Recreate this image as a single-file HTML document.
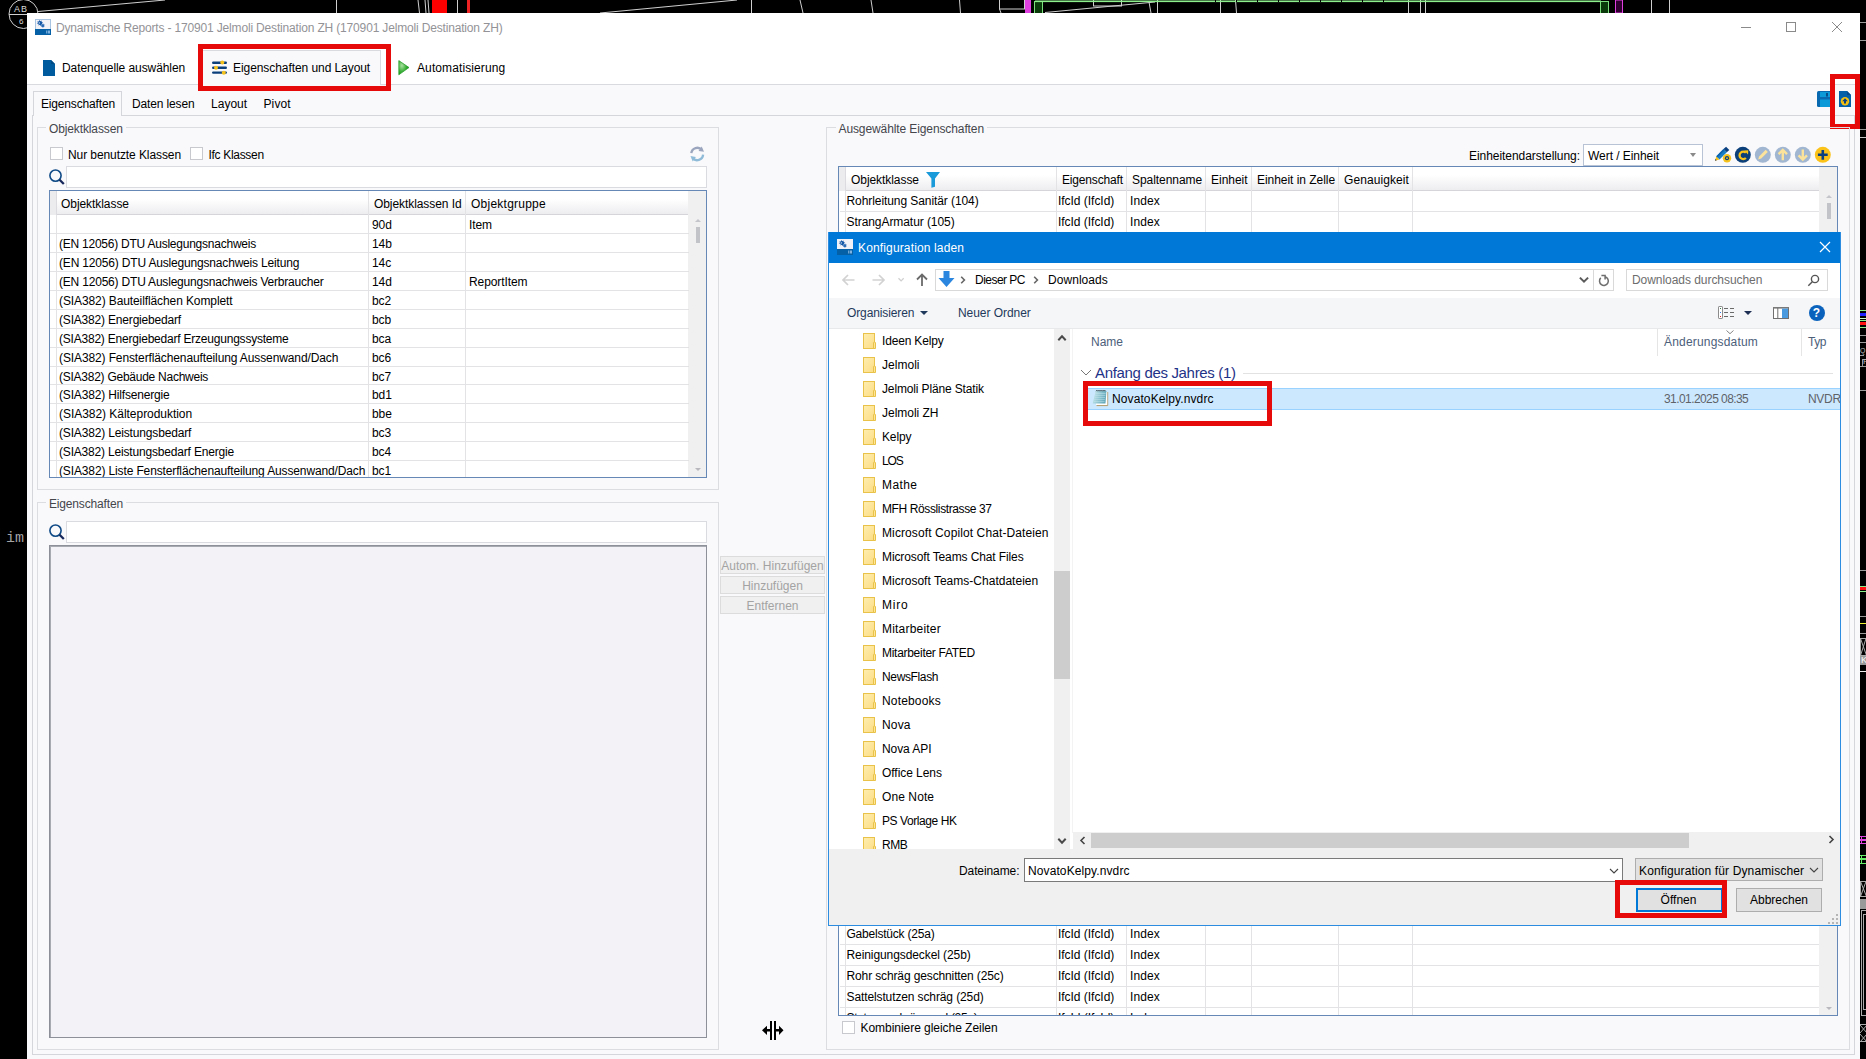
<!DOCTYPE html><html lang="de"><head><meta charset="utf-8"><title>Dynamische Reports</title><style>
*{box-sizing:border-box;margin:0;padding:0}
html,body{width:1866px;height:1059px;overflow:hidden;background:#000}
body{font-family:"Liberation Sans",sans-serif;font-size:12px;color:#000;position:relative}
.a{position:absolute}
.t{position:absolute;white-space:nowrap;line-height:14px;height:14px}
.win{left:27px;top:13px;width:1833px;height:1046px;background:#f9f9fb}
.hl{position:absolute;height:1px;background:#d5d6da}
.vl{position:absolute;width:1px;background:#d5d6da}
.gb{position:absolute;border:1px solid #dcdde1}
.cb{position:absolute;width:13px;height:13px;border:1px solid #c8c9cf;background:#fff}
.inp{position:absolute;background:#fff;border:1px solid #dadbe0}
.grid{position:absolute;background:#fff;border:1px solid #6588b6;overflow:hidden}
.hdr{position:absolute;background:linear-gradient(#fff 0%,#fff 35%,#ededf0 100%);border-bottom:1px solid #d6d6da}
.red{position:absolute;border:5px solid #e60a0a}
.btn{position:absolute;border:1px solid #dcdcdc;background:#f0f0f0;color:#a3a3a3;text-align:center;line-height:16px;white-space:nowrap}
.fold{position:absolute;width:13px;height:16px}
</style></head><body>
<svg class="a" style="left:0;top:0" width="1866" height="30" viewBox="0 0 1866 30">
<g fill="none" stroke="#cfcfcf" stroke-width="1">
<circle cx="23.5" cy="14" r="14.5"/><line x1="9" y1="14.5" x2="38" y2="14.5"/>
<line x1="38" y1="11.5" x2="165" y2="0"/>
<line x1="336.5" y1="0" x2="336.5" y2="13"/>
<line x1="418" y1="0" x2="419.5" y2="13"/><line x1="425" y1="0" x2="426" y2="13"/><line x1="428" y1="0" x2="429" y2="13"/>
<line x1="457.5" y1="0" x2="457.5" y2="13"/>
<line x1="600" y1="13" x2="737" y2="0"/>
<line x1="751.5" y1="0" x2="751.5" y2="13"/>
<line x1="800" y1="0" x2="803" y2="13"/>
<line x1="871" y1="0" x2="873" y2="13"/>
<line x1="959.5" y1="0" x2="960.5" y2="13"/>
<rect x="999.5" y="-2" width="25" height="11"/><line x1="999.5" y1="9" x2="1001" y2="13"/>
<rect x="1093.5" y="-2" width="28" height="8"/>
<line x1="1045" y1="12.5" x2="1155" y2="2"/>
<line x1="1121.5" y1="0" x2="1121.5" y2="6"/><line x1="1149" y1="2" x2="1151" y2="13"/><line x1="1157.5" y1="0" x2="1157.5" y2="13"/>
<line x1="1220.5" y1="0" x2="1220.5" y2="13"/><line x1="1235.5" y1="0" x2="1236.5" y2="13"/>
<line x1="1408.5" y1="0" x2="1408.5" y2="13"/><line x1="1420.5" y1="0" x2="1420.5" y2="13"/><line x1="1425.5" y1="0" x2="1425.5" y2="13"/>
<line x1="1651.5" y1="0" x2="1651.5" y2="13"/><line x1="1669.5" y1="0" x2="1669.5" y2="13"/>
</g>
<rect x="432" y="0" width="15" height="13" fill="#f00"/>
<rect x="467" y="0" width="3" height="13" fill="#e22"/>
<rect x="1025" y="0" width="6" height="13" fill="#e040e0"/>
<rect x="1034.5" y="1.5" width="8" height="12" fill="#0a3a0a" stroke="#7be07b"/>
<rect x="1035" y="0.5" width="566" height="1.6" fill="#8df08d"/>
<rect x="1600.5" y="1.5" width="8" height="12" fill="#0a3a0a" stroke="#7be07b"/>
<rect x="1615.5" y="0" width="7" height="13" fill="#300030" stroke="#e040e0"/>
<g fill="#000"><rect x="1257" y="0" width="1" height="2"/><rect x="1278" y="0" width="1" height="2"/><rect x="1299" y="0" width="1" height="2"/><rect x="1320" y="0" width="1" height="2"/><rect x="1341" y="0" width="1" height="2"/><rect x="1362" y="0" width="1" height="2"/><rect x="1383" y="0" width="1" height="2"/><rect x="1236" y="0" width="1" height="2"/><rect x="1215" y="0" width="1" height="2"/></g>
</svg>
<div class="t" style="left:14px;top:2px;color:#ddd;font-size:9px;letter-spacing:1px">AB</div>
<div class="t" style="left:19px;top:15px;color:#ddd;font-size:8px">6</div>
<div class="t" style="left:6px;top:531px;color:#a4a4a4;font-family:'Liberation Mono',monospace;font-size:15px;letter-spacing:0px;line-height:16px;height:16px">im</div>
<div class="a win">
<div class="a" style="left:0;top:0;width:1833px;height:71px;background:#fff"></div>
<div class="hl" style="left:0;top:71px;width:1833px;background:#d9dadf"></div>
</div>
<svg class="a" style="left:35px;top:19px" width="16" height="16" viewBox="0 0 16 16"><rect x="0" y="0" width="16" height="16" fill="#f1f1f8"/><rect x="0.5" y="0.5" width="15" height="15" fill="none" stroke="#a8c4e0"/><rect x="0" y="10" width="16" height="6" fill="#0560a6"/><path d="M1.8 4.2l1.2-0.6-0.6-1.4 1.5 0.2 0.5-1.4 1 1.2 1.3-0.7-0.1 1.5 1.4 0.3-1 1 0.8 1.3-1.5-0.1-0.5 1.4-1-1.1-1.3 0.8 0.1-1.5z" fill="#1558a8"/><circle cx="4.3" cy="3.9" r="0.7" fill="#dfe8f4"/><path d="M5.8 6.2l1-0.2-0.1-1.1 0.9 0.5 0.7-0.8 0.3 1 1.1 0 -0.6 0.9 0.8 0.7-1 0.3 0 1.1-0.9-0.6-0.7 0.8-0.3-1-1.1 0 0.6-0.9z" fill="#2a6ab4"/><rect x="11.3" y="11.5" width="1" height="3" fill="#9cc4ea"/><rect x="13" y="11.5" width="2" height="3" fill="#7fb2e0"/></svg>
<div class="t" style="left:56px;top:21px;color:#939397;letter-spacing:-0.167px">Dynamische Reports - 170901 Jelmoli Destination ZH (170901 Jelmoli Destination ZH)</div>
<svg class="a" style="left:1730px;top:17px" width="120" height="20" viewBox="0 0 120 20" fill="none" stroke="#8a8a8a" stroke-width="1"><line x1="11" y1="10.5" x2="21" y2="10.5"/><rect x="56.5" y="5.5" width="9" height="9"/><path d="M102 5l10 10M112 5l-10 10"/></svg>
<div class="a" style="left:202px;top:50px;width:179px;height:35px;background:#f9f9fb;border:1px solid #d9dadf;border-bottom:none"></div>
<svg class="a" style="left:43px;top:60px" width="12" height="16" viewBox="0 0 12 16"><path d="M0 0h8l4 4v12h-12z" fill="#005a9e"/><path d="M8 0l4 4h-4z" fill="#004a86"/></svg>
<div class="t" style="left:62px;top:61px;;letter-spacing:-0.078px">Datenquelle auswählen</div>
<svg class="a" style="left:211px;top:59px" width="17" height="17" viewBox="0 0 17 17"><g stroke="#0b3f7c" stroke-width="2.4" stroke-linecap="round"><line x1="2.2" y1="3.8" x2="14.8" y2="3.8"/><line x1="2.2" y1="8.7" x2="14.8" y2="8.7"/><line x1="2.2" y1="13.6" x2="14.8" y2="13.6"/></g><circle cx="11.3" cy="3.6" r="2" fill="#f5c21c"/><circle cx="5" cy="8.7" r="2" fill="#f5c21c"/><circle cx="12.8" cy="13.8" r="2" fill="#f5c21c"/></svg>
<div class="t" style="left:233px;top:61px;;letter-spacing:-0.069px">Eigenschaften und Layout</div>
<svg class="a" style="left:398px;top:60px" width="12" height="16" viewBox="0 0 12 16"><defs><radialGradient id="pg" cx="0.3" cy="0.35" r="0.7"><stop offset="0" stop-color="#a8e0a0"/><stop offset="0.6" stop-color="#3db03a"/><stop offset="1" stop-color="#17961a"/></radialGradient></defs><path d="M0.8 0.6l10.2 6.9-10.2 7.3z" fill="url(#pg)" stroke="#1f9a22" stroke-width="0.7" stroke-linejoin="round"/></svg>
<div class="t" style="left:417px;top:61px;;letter-spacing:0.106px">Automatisierung</div>
<div class="red" style="left:198px;top:44px;width:193px;height:47px"></div>
<div class="hl" style="left:32px;top:115px;width:1823px;background:#d5d6db"></div>
<div class="vl" style="left:32px;top:115px;height:940px;background:#d5d6db"></div>
<div class="vl" style="left:1854px;top:115px;height:940px;background:#d5d6db"></div>
<div class="hl" style="left:32px;top:1054px;width:1823px;background:#d5d6db"></div>
<div class="a" style="left:33px;top:91px;width:89px;height:25px;background:#f9f9fb;border:1px solid #d5d6db;border-bottom:none"></div>
<div class="t" style="left:41px;top:97px;;letter-spacing:-0.164px">Eigenschaften</div>
<div class="t" style="left:132px;top:97px;;letter-spacing:-0.135px">Daten lesen</div>
<div class="t" style="left:211px;top:97px;;letter-spacing:0.014px">Layout</div>
<div class="t" style="left:263.5px;top:97px;;letter-spacing:0.103px">Pivot</div>
<svg class="a" style="left:1817px;top:91px" width="15" height="16" viewBox="0 0 15 16"><rect x="0" y="0" width="15" height="16" rx="1.5" fill="#0868b0"/><rect x="3" y="1" width="10" height="5" fill="#0d9ad8"/><rect x="9" y="2" width="2" height="3.5" fill="#064f8c"/><rect x="3" y="8.5" width="11" height="7.5" fill="#0d9ad8"/></svg>
<svg class="a" style="left:1839px;top:91px" width="12" height="16" viewBox="0 0 12 16"><path d="M0 0h8l4 4v12h-12z" fill="#0660a8"/><path d="M8 0l4 4h-4z" fill="#054a8a"/><circle cx="6" cy="10.2" r="4.2" fill="#f5c010"/><path d="M6 7.2l-2.8 3h1.8v2.3h2v-2.3h1.8z" fill="#0a3f80"/></svg>
<div class="red" style="left:1830px;top:74px;width:30px;height:55px"></div>
<div class="gb" style="left:37px;top:127px;width:682px;height:363px"></div>
<div class="t" style="left:46px;top:122px;padding:0 3px;background:#f9f9fb;color:#44464c;letter-spacing:-0.123px">Objektklassen</div>
<div class="cb" style="left:50px;top:147px"></div>
<div class="t" style="left:68px;top:148px;;letter-spacing:-0.086px">Nur benutzte Klassen</div>
<div class="cb" style="left:190px;top:147px"></div>
<div class="t" style="left:208.5px;top:148px;;letter-spacing:-0.310px">Ifc Klassen</div>
<svg class="a" style="left:689px;top:146px" width="17" height="17" viewBox="0 0 17 17" fill="none"><path d="M2.3 7.2a6 6 0 0 1 10.6-3.2" stroke="#9ba6be" stroke-width="2.3"/><path d="M12.7 0.5l2.3 5.3-5.4-0.9z" fill="#9ba6be"/><path d="M14.1 8.6a6 6 0 0 1-10.6 3.4" stroke="#8fbbd8" stroke-width="2.3"/><path d="M3.7 15.4l-2.2-5.3 5.4 0.9z" fill="#8fbbd8"/></svg>
<svg class="a" style="left:49px;top:168px" width="17" height="18" viewBox="0 0 17 18" fill="none"><circle cx="6.5" cy="7.6" r="5.6" stroke="#0f4a86" stroke-width="1.6"/><path d="M10.6 11.8l4.2 4.2" stroke="#16275a" stroke-width="2.3"/></svg>
<div class="inp" style="left:66px;top:166px;width:641px;height:22px"></div>
<div class="grid" style="left:49px;top:190px;width:658px;height:288px">
<div class="hdr" style="left:0;top:0;width:638px;height:24px"></div>
<div class="a" style="left:0;top:0;width:7px;height:24px;background:#ececef;border-right:1px solid #dcdce0"></div>
<div class="a" style="left:638px;top:0;width:18px;height:286px;background:#f0f0f0"></div>
<div class="a" style="left:646px;top:36px;width:4px;height:16px;background:#c2c3c9"></div>
<div class="a" style="left:644.5px;top:28px;width:0;height:0;border:3.5px solid transparent;border-top:none;border-bottom:3.5px solid #c4c4cb"></div>
<div class="a" style="left:644.5px;top:277px;width:0;height:0;border:3.5px solid transparent;border-bottom:none;border-top:3.5px solid #b8b8be"></div>
<div class="vl" style="left:318px;top:0;height:286px;background:#e3e3e6"></div>
<div class="vl" style="left:415px;top:0;height:286px;background:#e3e3e6"></div>
<div class="vl" style="left:6px;top:24px;height:262px;background:#e3e3e6"></div>
<div class="t" style="left:11px;top:6px;;letter-spacing:-0.064px">Objektklasse</div>
<div class="t" style="left:324px;top:6px;;letter-spacing:-0.075px">Objektklassen Id</div>
<div class="t" style="left:421px;top:6px;;letter-spacing:0.241px">Objektgruppe</div>
<div class="hl" style="left:0;top:42px;width:639px;background:#e3e3e6"></div>
<div class="t" style="left:322px;top:27px;letter-spacing:-0.1px">90d</div>
<div class="t" style="left:419px;top:27px;letter-spacing:-0.1px">Item</div>
<div class="hl" style="left:0;top:61px;width:639px;background:#e3e3e6"></div>
<div class="t" style="left:9px;top:46px;;letter-spacing:-0.237px">(EN 12056) DTU Auslegungsnachweis</div>
<div class="t" style="left:322px;top:46px;letter-spacing:-0.1px">14b</div>
<div class="hl" style="left:0;top:80px;width:639px;background:#e3e3e6"></div>
<div class="t" style="left:9px;top:65px;;letter-spacing:-0.177px">(EN 12056) DTU Auslegungsnachweis Leitung</div>
<div class="t" style="left:322px;top:65px;letter-spacing:-0.1px">14c</div>
<div class="hl" style="left:0;top:99px;width:639px;background:#e3e3e6"></div>
<div class="t" style="left:9px;top:84px;;letter-spacing:-0.197px">(EN 12056) DTU Auslegungsnachweis Verbraucher</div>
<div class="t" style="left:322px;top:84px;letter-spacing:-0.1px">14d</div>
<div class="t" style="left:419px;top:84px;letter-spacing:-0.1px">ReportItem</div>
<div class="hl" style="left:0;top:118px;width:639px;background:#e3e3e6"></div>
<div class="t" style="left:9px;top:103px;;letter-spacing:-0.102px">(SIA382) Bauteilflächen Komplett</div>
<div class="t" style="left:322px;top:103px;letter-spacing:-0.1px">bc2</div>
<div class="hl" style="left:0;top:137px;width:639px;background:#e3e3e6"></div>
<div class="t" style="left:9px;top:122px;;letter-spacing:-0.185px">(SIA382) Energiebedarf</div>
<div class="t" style="left:322px;top:122px;letter-spacing:-0.1px">bcb</div>
<div class="hl" style="left:0;top:156px;width:639px;background:#e3e3e6"></div>
<div class="t" style="left:9px;top:141px;;letter-spacing:-0.214px">(SIA382) Energiebedarf Erzeugungssysteme</div>
<div class="t" style="left:322px;top:141px;letter-spacing:-0.1px">bca</div>
<div class="hl" style="left:0;top:175px;width:639px;background:#e3e3e6"></div>
<div class="t" style="left:9px;top:160px;;letter-spacing:-0.115px">(SIA382) Fensterflächenaufteilung Aussenwand/Dach</div>
<div class="t" style="left:322px;top:160px;letter-spacing:-0.1px">bc6</div>
<div class="hl" style="left:0;top:193px;width:639px;background:#e3e3e6"></div>
<div class="t" style="left:9px;top:179px;;letter-spacing:-0.255px">(SIA382) Gebäude Nachweis</div>
<div class="t" style="left:322px;top:179px;letter-spacing:-0.1px">bc7</div>
<div class="hl" style="left:0;top:212px;width:639px;background:#e3e3e6"></div>
<div class="t" style="left:9px;top:197px;;letter-spacing:-0.163px">(SIA382) Hilfsenergie</div>
<div class="t" style="left:322px;top:197px;letter-spacing:-0.1px">bd1</div>
<div class="hl" style="left:0;top:231px;width:639px;background:#e3e3e6"></div>
<div class="t" style="left:9px;top:216px;;letter-spacing:-0.039px">(SIA382) Kälteproduktion</div>
<div class="t" style="left:322px;top:216px;letter-spacing:-0.1px">bbe</div>
<div class="hl" style="left:0;top:250px;width:639px;background:#e3e3e6"></div>
<div class="t" style="left:9px;top:235px;;letter-spacing:-0.161px">(SIA382) Leistungsbedarf</div>
<div class="t" style="left:322px;top:235px;letter-spacing:-0.1px">bc3</div>
<div class="hl" style="left:0;top:269px;width:639px;background:#e3e3e6"></div>
<div class="t" style="left:9px;top:254px;;letter-spacing:-0.180px">(SIA382) Leistungsbedarf Energie</div>
<div class="t" style="left:322px;top:254px;letter-spacing:-0.1px">bc4</div>
<div class="hl" style="left:0;top:288px;width:639px;background:#e3e3e6"></div>
<div class="t" style="left:9px;top:273px;;letter-spacing:-0.132px">(SIA382) Liste Fensterflächenaufteilung Aussenwand/Dach</div>
<div class="t" style="left:322px;top:273px;letter-spacing:-0.1px">bc1</div>
</div>
<div class="gb" style="left:37px;top:502px;width:682px;height:548px"></div>
<div class="t" style="left:46px;top:497px;padding:0 3px;background:#f9f9fb;color:#44464c;letter-spacing:-0.164px">Eigenschaften</div>
<svg class="a" style="left:49px;top:523px" width="17" height="18" viewBox="0 0 17 18" fill="none"><circle cx="6.5" cy="7.6" r="5.6" stroke="#0f4a86" stroke-width="1.6"/><path d="M10.6 11.8l4.2 4.2" stroke="#16275a" stroke-width="2.3"/></svg>
<div class="inp" style="left:66px;top:521px;width:641px;height:22px"></div>
<div class="a" style="left:49px;top:545px;width:658px;height:493px;background:#f3f2f7;border:1px solid #8d9099;box-shadow:inset 1px 1px 0 #a8aab2"></div>
<div class="btn" style="left:720px;top:556px;width:105px;height:18px;letter-spacing:0.03px;padding-top:1px">Autom. Hinzufügen</div>
<div class="btn" style="left:720px;top:576px;width:105px;height:18px;padding-top:1px">Hinzufügen</div>
<div class="btn" style="left:720px;top:596px;width:105px;height:18px;padding-top:1px">Entfernen</div>
<svg class="a" style="left:762px;top:1020px" width="22" height="21" viewBox="0 0 22 21"><g fill="#000"><rect x="8" y="1" width="2" height="19"/><rect x="12" y="1" width="2" height="19"/><path d="M0 10.3l5-4.6v3.3h3v2.6h-3v3.3z"/><path d="M21.5 10.3l-4.5-4.6v3.3h-3v2.6h3v3.3z"/></g></svg>
<div class="gb" style="left:826px;top:127px;width:1024px;height:923px"></div>
<div class="t" style="left:835.5px;top:122px;padding:0 3px;background:#f9f9fb;color:#44464c;letter-spacing:-0.105px">Ausgewählte Eigenschaften</div>
<div class="t" style="left:1469px;top:149px;letter-spacing:-0.05px">Einheitendarstellung:</div>
<div class="inp" style="left:1583px;top:144px;width:120px;height:22px;border-color:#b9c3d6"></div>
<div class="t" style="left:1588px;top:149px;letter-spacing:-0.05px">Wert / Einheit</div>
<div class="a" style="left:1690px;top:153px;width:0;height:0;border:3.5px solid transparent;border-bottom:none;border-top:4px solid #8a8a8a"></div>
<svg class="a" style="left:1713px;top:146px" width="120" height="18" viewBox="0 0 120 18">
<g><path d="M2 14.8l1.3-4.6 3.3 3.3z" fill="#f5c21c"/><path d="M2 14.8l0.5-1.7 1.2 1.2z" fill="#1a2a50"/><path d="M3.3 10.2l7.2-7.2 3.3 3.3-7.2 7.2z" fill="#1a80c6"/><path d="M3.3 10.2l7.2-7.2 1.2 1.2-7.2 7.2z" fill="#0c62ac"/><path d="M10.5 3l2.6-2.3 3.2 3.2-2.5 2.4z" fill="#0a3f80"/><circle cx="14" cy="12.2" r="4.2" fill="#f5c21c"/><circle cx="14" cy="12.2" r="2.1" fill="#0a3f80"/><circle cx="14" cy="12.2" r="0.9" fill="#f5c21c"/></g>
<g><circle cx="29.8" cy="8.8" r="8" fill="#0a3f7a"/><path d="M32.9 12a3.7 3.7 0 1 1 0-5.2" fill="none" stroke="#f8c31c" stroke-width="2.3"/><path d="M31.2 4.6l4.1-0.4-0.3 4.4z" fill="#f8c31c"/></g>
<g><circle cx="49.8" cy="8.8" r="8" fill="#a1b7d1"/><path d="M45.2 13.4l0.9-3 6.6-6.6 2.1 2.1-6.6 6.6z" fill="#fbe39b"/></g>
<g><circle cx="69.8" cy="8.8" r="8" fill="#a1b7d1"/><path d="M69.8 14.2v-9.5M65.6 8.2l4.2-4.2 4.2 4.2" fill="none" stroke="#fbe39b" stroke-width="2.4"/></g>
<g><circle cx="89.8" cy="8.8" r="8" fill="#a1b7d1"/><path d="M89.8 3.4v9.5M85.6 9.4l4.2 4.2 4.2-4.2" fill="none" stroke="#fbe39b" stroke-width="2.4"/></g>
<g><circle cx="109.8" cy="8.8" r="8" fill="#fbc31a"/><path d="M104.9 8.8h9.8M109.8 3.9v9.8" stroke="#0a3f80" stroke-width="2.6"/></g>
</svg>
<div class="grid" style="left:838px;top:166px;width:1000px;height:850px"><div class="a" style="left:1px;top:0;width:998px;height:848px">
<div class="hdr" style="left:0;top:0;width:979px;height:24px"></div>
<div class="a" style="left:-1px;top:0;width:7px;height:24px;background:#ececef;border-right:1px solid #dcdce0"></div>
<div class="a" style="left:979px;top:0;width:19px;height:848px;background:#f0f0f0"></div>
<div class="a" style="left:987px;top:36px;width:4px;height:16px;background:#c2c3c9"></div>
<div class="a" style="left:985.5px;top:28px;width:0;height:0;border:3.5px solid transparent;border-top:none;border-bottom:3.5px solid #c4c4cb"></div>
<div class="a" style="left:985.5px;top:840px;width:0;height:0;border:3.5px solid transparent;border-bottom:none;border-top:3.5px solid #b8b8be"></div>
<div class="vl" style="left:5px;top:24px;height:824px;background:#e3e3e6"></div>
<div class="vl" style="left:216px;top:0;height:848px;background:#e3e3e6"></div>
<div class="vl" style="left:286px;top:0;height:848px;background:#e3e3e6"></div>
<div class="vl" style="left:365px;top:0;height:848px;background:#e3e3e6"></div>
<div class="vl" style="left:411px;top:0;height:848px;background:#e3e3e6"></div>
<div class="vl" style="left:498px;top:0;height:848px;background:#e3e3e6"></div>
<div class="vl" style="left:572px;top:0;height:848px;background:#e3e3e6"></div>
<div class="t" style="left:11px;top:6px;;letter-spacing:-0.064px">Objektklasse</div>
<svg class="a" style="left:86px;top:4.5px" width="14" height="16" viewBox="0 0 14 16"><path d="M0 0h14l-5 6.5v8.3l-3.6 1v-9.3z" fill="#1a9ad9"/></svg>
<div class="t" style="left:222px;top:6px;;letter-spacing:-0.172px">Eigenschaft</div>
<div class="t" style="left:292px;top:6px;;letter-spacing:-0.052px">Spaltenname</div>
<div class="t" style="left:371px;top:6px;;letter-spacing:-0.017px">Einheit</div>
<div class="t" style="left:417px;top:6px;;letter-spacing:-0.041px">Einheit in Zelle</div>
<div class="t" style="left:504px;top:6px;;letter-spacing:0.075px">Genauigkeit</div>
<div class="hl" style="left:0;top:44px;width:979px;background:#e3e3e6"></div>
<div class="t" style="left:6.5px;top:27px;;letter-spacing:-0.078px">Rohrleitung Sanitär (104)</div>
<div class="t" style="left:218px;top:27px;;letter-spacing:-0.032px">IfcId (IfcId)</div>
<div class="t" style="left:290px;top:27px;;letter-spacing:0.085px">Index</div>
<div class="hl" style="left:0;top:65px;width:979px;background:#e3e3e6"></div>
<div class="t" style="left:6.5px;top:48px;;letter-spacing:-0.066px">StrangArmatur (105)</div>
<div class="t" style="left:218px;top:48px;;letter-spacing:-0.032px">IfcId (IfcId)</div>
<div class="t" style="left:290px;top:48px;;letter-spacing:0.085px">Index</div>
<div class="hl" style="left:0;top:777px;width:979px;background:#e3e3e6"></div>
<div class="t" style="left:6.5px;top:760px;;letter-spacing:-0.213px">Gabelstück (25a)</div>
<div class="t" style="left:218px;top:760px;;letter-spacing:-0.032px">IfcId (IfcId)</div>
<div class="t" style="left:290px;top:760px;;letter-spacing:0.085px">Index</div>
<div class="hl" style="left:0;top:798px;width:979px;background:#e3e3e6"></div>
<div class="t" style="left:6.5px;top:781px;;letter-spacing:-0.089px">Reinigungsdeckel (25b)</div>
<div class="t" style="left:218px;top:781px;;letter-spacing:-0.032px">IfcId (IfcId)</div>
<div class="t" style="left:290px;top:781px;;letter-spacing:0.085px">Index</div>
<div class="hl" style="left:0;top:819px;width:979px;background:#e3e3e6"></div>
<div class="t" style="left:6.5px;top:802px;;letter-spacing:-0.127px">Rohr schräg geschnitten (25c)</div>
<div class="t" style="left:218px;top:802px;;letter-spacing:-0.032px">IfcId (IfcId)</div>
<div class="t" style="left:290px;top:802px;;letter-spacing:0.085px">Index</div>
<div class="hl" style="left:0;top:840px;width:979px;background:#e3e3e6"></div>
<div class="t" style="left:6.5px;top:823px;;letter-spacing:-0.115px">Sattelstutzen schräg (25d)</div>
<div class="t" style="left:218px;top:823px;;letter-spacing:-0.032px">IfcId (IfcId)</div>
<div class="t" style="left:290px;top:823px;;letter-spacing:0.085px">Index</div>
<div class="hl" style="left:0;top:861px;width:979px;background:#e3e3e6"></div>
<div class="t" style="left:6.5px;top:844px;;letter-spacing:-0.315px">Stutzen schräg rund (25e)</div>
<div class="t" style="left:218px;top:844px;;letter-spacing:-0.032px">IfcId (IfcId)</div>
<div class="t" style="left:290px;top:844px;;letter-spacing:0.085px">Index</div>
</div></div>
<div class="cb" style="left:842px;top:1021px"></div>
<div class="t" style="left:860.5px;top:1021px;;letter-spacing:-0.041px">Kombiniere gleiche Zeilen</div>
<div class="a" style="left:828px;top:232px;width:1013px;height:694px;background:#fff;border:1px solid #2b8ce0;border-top:none;overflow:hidden">
<div class="a" style="left:-1px;top:0;width:1013px;height:31px;background:#0078d7"></div>
<svg class="a" style="left:8px;top:7px" width="16" height="16" viewBox="0 0 16 16"><rect x="0" y="0" width="16" height="16" fill="#f1f1f8"/><rect x="0" y="10" width="16" height="6" fill="#0560a6"/><path d="M1.8 4.2l1.2-0.6-0.6-1.4 1.5 0.2 0.5-1.4 1 1.2 1.3-0.7-0.1 1.5 1.4 0.3-1 1 0.8 1.3-1.5-0.1-0.5 1.4-1-1.1-1.3 0.8 0.1-1.5z" fill="#1558a8"/><circle cx="4.3" cy="3.9" r="0.7" fill="#dfe8f4"/><path d="M5.8 6.2l1-0.2-0.1-1.1 0.9 0.5 0.7-0.8 0.3 1 1.1 0 -0.6 0.9 0.8 0.7-1 0.3 0 1.1-0.9-0.6-0.7 0.8-0.3-1-1.1 0 0.6-0.9z" fill="#2a6ab4"/><rect x="11.3" y="11.5" width="1" height="3" fill="#9cc4ea"/><rect x="13" y="11.5" width="2" height="3" fill="#7fb2e0"/></svg>
<div class="t" style="left:29px;top:9px;color:#fff;letter-spacing:0.143px">Konfiguration laden</div>
<svg class="a" style="left:990px;top:9px" width="12" height="12" viewBox="0 0 12 12"><path d="M1 1l10 10M11 1l-10 10" stroke="#fff" stroke-width="1.2" fill="none"/></svg>
<svg class="a" style="left:10px;top:37px" width="90" height="22" viewBox="0 0 90 22" fill="none" stroke-linecap="butt">
<path d="M4 11h11.5M9 6l-5 5 5 5" stroke="#d2d2d2" stroke-width="1.7"/>
<path d="M33.5 11h11.5M40 6l5 5-5 5" stroke="#d2d2d2" stroke-width="1.7"/>
<path d="M59.5 9.3l2.6 2.6 2.6-2.6" stroke="#d0d0d0" stroke-width="1.3"/>
<path d="M83 17v-11M78 10.5l5-5 5 5" stroke="#6a6a6a" stroke-width="1.8"/>
</svg>
<div class="a" style="left:106px;top:37px;width:679px;height:22px;border:1px solid #d9d9d9"></div>
<div class="a" style="left:764px;top:37px;width:1px;height:22px;background:#d9d9d9"></div>
<svg class="a" style="left:109px;top:39px" width="17" height="17" viewBox="0 0 17 17"><path d="M5.5 0h6v7h5l-8 9-8-9h5z" fill="#2a86de"/></svg>
<svg class="a" style="left:131px;top:43px" width="6" height="10" viewBox="0 0 6 10"><path d="M1.2 1.8l3.2 3.2-3.2 3.2" stroke="#666" stroke-width="1.6" fill="none"/></svg>
<div class="t" style="left:146px;top:41px;;letter-spacing:-0.523px">Dieser PC</div>
<svg class="a" style="left:204px;top:43px" width="6" height="10" viewBox="0 0 6 10"><path d="M1.2 1.8l3.2 3.2-3.2 3.2" stroke="#666" stroke-width="1.6" fill="none"/></svg>
<div class="t" style="left:219px;top:41px;;letter-spacing:0.053px">Downloads</div>
<svg class="a" style="left:749px;top:44px" width="12" height="8" viewBox="0 0 12 8"><path d="M1.9 1.6l4.1 4.1 4.1-4.1" stroke="#5a5a5a" stroke-width="2" fill="none"/></svg>
<svg class="a" style="left:768px;top:40px" width="14" height="16" viewBox="0 0 14 16" fill="none" stroke="#6e6e6e" stroke-width="1.5"><path d="M8.04 4.75A4.4 4.4 0 1 1 3.79 5.89"/><path d="M4.4 3.6H8.1V7.4"/></svg>
<div class="a" style="left:797px;top:37px;width:202px;height:22px;border:1px solid #d9d9d9"></div>
<div class="t" style="left:803px;top:41px;color:#6d6d6d;letter-spacing:-0.05px">Downloads durchsuchen</div>
<svg class="a" style="left:978px;top:42px" width="13" height="13" viewBox="0 0 13 13" fill="none" stroke="#555" stroke-width="1.4"><circle cx="8" cy="5" r="3.6"/><path d="M5.3 7.7l-4 4"/></svg>
<div class="a" style="left:0;top:66px;width:1011px;height:31px;background:#f5f6f7;border-bottom:1px solid #e8e9ea"></div>
<div class="t" style="left:18px;top:74px;color:#1e395b;letter-spacing:-0.12px">Organisieren</div>
<div class="a" style="left:91px;top:79px;width:0;height:0;border:4px solid transparent;border-bottom:none;border-top:4px solid #1e395b"></div>
<div class="t" style="left:129px;top:74px;color:#1e395b;letter-spacing:-0.05px">Neuer Ordner</div>
<svg class="a" style="left:889px;top:74px" width="36" height="14" viewBox="0 0 36 14"><rect x="0.5" y="0.5" width="4" height="12" rx="0.6" fill="#fff" stroke="#8c8c8c"/><rect x="2" y="2" width="1" height="1" fill="#3a7a4a"/><rect x="2" y="6" width="1" height="1" fill="#3a7adf"/><rect x="2" y="10" width="1" height="1" fill="#e02020"/><g fill="#6a6a6a"><rect x="6" y="2" width="4" height="1"/><rect x="12" y="2" width="4" height="1"/><rect x="6" y="6" width="4" height="1"/><rect x="12" y="6" width="4" height="1"/><rect x="6" y="10" width="4" height="1"/><rect x="12" y="10" width="4" height="1"/></g><path d="M26 5h8l-4 4z" fill="#1e2f55"/></svg>
<svg class="a" style="left:944px;top:75px" width="16" height="12" viewBox="0 0 16 12"><rect x="0.5" y="0.5" width="15" height="11" fill="#fff" stroke="#707070"/><rect x="0" y="0" width="16" height="1.6" fill="#7a7a7a"/><rect x="4.3" y="1" width="1" height="10.5" fill="#707070"/><rect x="9" y="1.6" width="6" height="9.4" fill="#4a9ae0"/></svg>
<div class="a" style="left:979.5px;top:73px;width:16px;height:16px;border-radius:50%;background:#0b62bd;color:#fff;font-weight:bold;font-size:12px;line-height:16px;text-align:center">?</div>
<svg width="0" height="0" style="position:absolute"><defs><linearGradient id="fg" x1="0" y1="0" x2="1" y2="1"><stop offset="0" stop-color="#ffeeb0"/><stop offset="1" stop-color="#fbdc84"/></linearGradient></defs></svg>
<svg class="fold" style="left:34px;top:101.0px" viewBox="0 0 13 16"><rect x="0.5" y="0.5" width="11" height="15" fill="url(#fg)" stroke="#e9c349"/><path d="M10.5 15.5v-5.5q0-1 1-1t1 1v5.5z" fill="#ffe596" stroke="#e9c349"/></svg>
<div class="t" style="left:53px;top:102.0px;;letter-spacing:-0.169px">Ideen Kelpy</div>
<svg class="fold" style="left:34px;top:125.0px" viewBox="0 0 13 16"><rect x="0.5" y="0.5" width="11" height="15" fill="url(#fg)" stroke="#e9c349"/><path d="M10.5 15.5v-5.5q0-1 1-1t1 1v5.5z" fill="#ffe596" stroke="#e9c349"/></svg>
<div class="t" style="left:53px;top:126.0px;;letter-spacing:0.026px">Jelmoli</div>
<svg class="fold" style="left:34px;top:149.0px" viewBox="0 0 13 16"><rect x="0.5" y="0.5" width="11" height="15" fill="url(#fg)" stroke="#e9c349"/><path d="M10.5 15.5v-5.5q0-1 1-1t1 1v5.5z" fill="#ffe596" stroke="#e9c349"/></svg>
<div class="t" style="left:53px;top:150.0px;;letter-spacing:-0.143px">Jelmoli Pläne Statik</div>
<svg class="fold" style="left:34px;top:173.0px" viewBox="0 0 13 16"><rect x="0.5" y="0.5" width="11" height="15" fill="url(#fg)" stroke="#e9c349"/><path d="M10.5 15.5v-5.5q0-1 1-1t1 1v5.5z" fill="#ffe596" stroke="#e9c349"/></svg>
<div class="t" style="left:53px;top:174.0px;;letter-spacing:-0.019px">Jelmoli ZH</div>
<svg class="fold" style="left:34px;top:197.0px" viewBox="0 0 13 16"><rect x="0.5" y="0.5" width="11" height="15" fill="url(#fg)" stroke="#e9c349"/><path d="M10.5 15.5v-5.5q0-1 1-1t1 1v5.5z" fill="#ffe596" stroke="#e9c349"/></svg>
<div class="t" style="left:53px;top:198.0px;;letter-spacing:-0.133px">Kelpy</div>
<svg class="fold" style="left:34px;top:221.0px" viewBox="0 0 13 16"><rect x="0.5" y="0.5" width="11" height="15" fill="url(#fg)" stroke="#e9c349"/><path d="M10.5 15.5v-5.5q0-1 1-1t1 1v5.5z" fill="#ffe596" stroke="#e9c349"/></svg>
<div class="t" style="left:53px;top:222.0px;;letter-spacing:-1.158px">LOS</div>
<svg class="fold" style="left:34px;top:245.0px" viewBox="0 0 13 16"><rect x="0.5" y="0.5" width="11" height="15" fill="url(#fg)" stroke="#e9c349"/><path d="M10.5 15.5v-5.5q0-1 1-1t1 1v5.5z" fill="#ffe596" stroke="#e9c349"/></svg>
<div class="t" style="left:53px;top:246.0px;;letter-spacing:0.410px">Mathe</div>
<svg class="fold" style="left:34px;top:269.0px" viewBox="0 0 13 16"><rect x="0.5" y="0.5" width="11" height="15" fill="url(#fg)" stroke="#e9c349"/><path d="M10.5 15.5v-5.5q0-1 1-1t1 1v5.5z" fill="#ffe596" stroke="#e9c349"/></svg>
<div class="t" style="left:53px;top:270.0px;;letter-spacing:-0.387px">MFH Rösslistrasse 37</div>
<svg class="fold" style="left:34px;top:293.0px" viewBox="0 0 13 16"><rect x="0.5" y="0.5" width="11" height="15" fill="url(#fg)" stroke="#e9c349"/><path d="M10.5 15.5v-5.5q0-1 1-1t1 1v5.5z" fill="#ffe596" stroke="#e9c349"/></svg>
<div class="t" style="left:53px;top:294.0px;;letter-spacing:0.107px">Microsoft Copilot Chat-Dateien</div>
<svg class="fold" style="left:34px;top:317.0px" viewBox="0 0 13 16"><rect x="0.5" y="0.5" width="11" height="15" fill="url(#fg)" stroke="#e9c349"/><path d="M10.5 15.5v-5.5q0-1 1-1t1 1v5.5z" fill="#ffe596" stroke="#e9c349"/></svg>
<div class="t" style="left:53px;top:318.0px;;letter-spacing:-0.112px">Microsoft Teams Chat Files</div>
<svg class="fold" style="left:34px;top:341.0px" viewBox="0 0 13 16"><rect x="0.5" y="0.5" width="11" height="15" fill="url(#fg)" stroke="#e9c349"/><path d="M10.5 15.5v-5.5q0-1 1-1t1 1v5.5z" fill="#ffe596" stroke="#e9c349"/></svg>
<div class="t" style="left:53px;top:342.0px;;letter-spacing:0.013px">Microsoft Teams-Chatdateien</div>
<svg class="fold" style="left:34px;top:365.0px" viewBox="0 0 13 16"><rect x="0.5" y="0.5" width="11" height="15" fill="url(#fg)" stroke="#e9c349"/><path d="M10.5 15.5v-5.5q0-1 1-1t1 1v5.5z" fill="#ffe596" stroke="#e9c349"/></svg>
<div class="t" style="left:53px;top:366.0px;;letter-spacing:0.785px">Miro</div>
<svg class="fold" style="left:34px;top:389.0px" viewBox="0 0 13 16"><rect x="0.5" y="0.5" width="11" height="15" fill="url(#fg)" stroke="#e9c349"/><path d="M10.5 15.5v-5.5q0-1 1-1t1 1v5.5z" fill="#ffe596" stroke="#e9c349"/></svg>
<div class="t" style="left:53px;top:390.0px;;letter-spacing:0.201px">Mitarbeiter</div>
<svg class="fold" style="left:34px;top:413.0px" viewBox="0 0 13 16"><rect x="0.5" y="0.5" width="11" height="15" fill="url(#fg)" stroke="#e9c349"/><path d="M10.5 15.5v-5.5q0-1 1-1t1 1v5.5z" fill="#ffe596" stroke="#e9c349"/></svg>
<div class="t" style="left:53px;top:414.0px;;letter-spacing:-0.288px">Mitarbeiter FATED</div>
<svg class="fold" style="left:34px;top:437.0px" viewBox="0 0 13 16"><rect x="0.5" y="0.5" width="11" height="15" fill="url(#fg)" stroke="#e9c349"/><path d="M10.5 15.5v-5.5q0-1 1-1t1 1v5.5z" fill="#ffe596" stroke="#e9c349"/></svg>
<div class="t" style="left:53px;top:438.0px;;letter-spacing:-0.357px">NewsFlash</div>
<svg class="fold" style="left:34px;top:461.0px" viewBox="0 0 13 16"><rect x="0.5" y="0.5" width="11" height="15" fill="url(#fg)" stroke="#e9c349"/><path d="M10.5 15.5v-5.5q0-1 1-1t1 1v5.5z" fill="#ffe596" stroke="#e9c349"/></svg>
<div class="t" style="left:53px;top:462.0px;;letter-spacing:0.166px">Notebooks</div>
<svg class="fold" style="left:34px;top:485.0px" viewBox="0 0 13 16"><rect x="0.5" y="0.5" width="11" height="15" fill="url(#fg)" stroke="#e9c349"/><path d="M10.5 15.5v-5.5q0-1 1-1t1 1v5.5z" fill="#ffe596" stroke="#e9c349"/></svg>
<div class="t" style="left:53px;top:486.0px;;letter-spacing:0.161px">Nova</div>
<svg class="fold" style="left:34px;top:509.0px" viewBox="0 0 13 16"><rect x="0.5" y="0.5" width="11" height="15" fill="url(#fg)" stroke="#e9c349"/><path d="M10.5 15.5v-5.5q0-1 1-1t1 1v5.5z" fill="#ffe596" stroke="#e9c349"/></svg>
<div class="t" style="left:53px;top:510.0px;;letter-spacing:-0.076px">Nova API</div>
<svg class="fold" style="left:34px;top:533.0px" viewBox="0 0 13 16"><rect x="0.5" y="0.5" width="11" height="15" fill="url(#fg)" stroke="#e9c349"/><path d="M10.5 15.5v-5.5q0-1 1-1t1 1v5.5z" fill="#ffe596" stroke="#e9c349"/></svg>
<div class="t" style="left:53px;top:534.0px;;letter-spacing:-0.048px">Office Lens</div>
<svg class="fold" style="left:34px;top:557.0px" viewBox="0 0 13 16"><rect x="0.5" y="0.5" width="11" height="15" fill="url(#fg)" stroke="#e9c349"/><path d="M10.5 15.5v-5.5q0-1 1-1t1 1v5.5z" fill="#ffe596" stroke="#e9c349"/></svg>
<div class="t" style="left:53px;top:558.0px;;letter-spacing:0.089px">One Note</div>
<svg class="fold" style="left:34px;top:581.0px" viewBox="0 0 13 16"><rect x="0.5" y="0.5" width="11" height="15" fill="url(#fg)" stroke="#e9c349"/><path d="M10.5 15.5v-5.5q0-1 1-1t1 1v5.5z" fill="#ffe596" stroke="#e9c349"/></svg>
<div class="t" style="left:53px;top:582.0px;;letter-spacing:-0.421px">PS Vorlage HK</div>
<svg class="fold" style="left:34px;top:605.0px" viewBox="0 0 13 16"><rect x="0.5" y="0.5" width="11" height="15" fill="url(#fg)" stroke="#e9c349"/><path d="M10.5 15.5v-5.5q0-1 1-1t1 1v5.5z" fill="#ffe596" stroke="#e9c349"/></svg>
<div class="t" style="left:53px;top:606.0px;;letter-spacing:-0.486px">RMB</div>
<div class="a" style="left:225px;top:97px;width:16px;height:520px;background:#f0f0f0"></div>
<div class="a" style="left:225px;top:339px;width:16px;height:108px;background:#cdcdcd"></div>
<svg class="a" style="left:228px;top:101px" width="10" height="9" viewBox="0 0 10 9"><path d="M1.3 7.2l3.7-3.9 3.7 3.9" stroke="#4a4a4a" stroke-width="2" fill="none"/></svg>
<svg class="a" style="left:228px;top:604.5px" width="10" height="9" viewBox="0 0 10 9"><path d="M1.3 1.8l3.7 3.9 3.7-3.9" stroke="#4a4a4a" stroke-width="2" fill="none"/></svg>
<div class="a" style="left:243px;top:97px;width:1px;height:504px;background:#f3f3f3"></div>
<div class="t" style="left:262px;top:103px;color:#4c607a">Name</div>
<div class="t" style="left:835px;top:103px;color:#4c607a;letter-spacing:0.184px">Änderungsdatum</div>
<div class="t" style="left:979px;top:103px;color:#4c607a;letter-spacing:-0.422px">Typ</div>
<div class="a" style="left:828px;top:97px;width:1px;height:27px;background:#e5e5e5"></div>
<div class="a" style="left:972px;top:97px;width:1px;height:27px;background:#e5e5e5"></div>
<svg class="a" style="left:896.5px;top:97.5px" width="8" height="5" viewBox="0 0 8 5"><path d="M0.5 0.5l3.5 3.2 3.5-3.2" stroke="#777" stroke-width="0.9" fill="none"/></svg>
<svg class="a" style="left:251px;top:137px" width="12" height="8" viewBox="0 0 12 8"><path d="M1 1l5 5 5-5" stroke="#777" stroke-width="1" fill="none"/></svg>
<div class="t" style="left:266px;top:132px;font-size:15px;line-height:18px;height:18px;color:#1e3287;letter-spacing:-0.33px">Anfang des Jahres (1)</div>
<div class="a" style="left:414px;top:141px;width:590px;height:1px;background:#e2e2e2"></div>
<div class="a" style="left:258px;top:156px;width:760px;height:22px;background:#cce8ff;border:1px solid #99d1ff"></div>
<svg class="a" style="left:263px;top:157px" width="17" height="18" viewBox="0 0 17 18"><defs><linearGradient id="np" x1="0" y1="0" x2="1" y2="0.3"><stop offset="0" stop-color="#d4eef2"/><stop offset="0.6" stop-color="#8cc4d0"/><stop offset="1" stop-color="#62a8ba"/></linearGradient></defs>
<path d="M4.5 16.6h11.2v-13.6" fill="none" stroke="#b39a68" stroke-width="1"/>
<path d="M4 3h11.2v13h-11.2z" fill="#fff"/>
<path d="M3.6 2h10.8l-0.9 12.6h-12.8z" fill="url(#np)"/>
<path d="M3 4.6h10.6M2.8 6.6h10.6M2.5 8.6h10.6M2.2 10.6h10.6M1.9 12.6h10.6" stroke="#c4e4ec" stroke-width="0.7" opacity="0.8"/>
<path d="M4 2.2l0.8-1.2 0.8 1.2 0.8-1.2 0.8 1.2 0.8-1.2 0.8 1.2 0.8-1.2 0.8 1.2 0.8-1.2 0.8 1.2 0.8-1.2 0.8 1.2" fill="none" stroke="#3a4a50" stroke-width="0.7"/>
</svg>
<div class="t" style="left:283px;top:160px;;letter-spacing:0.104px">NovatoKelpy.nvdrc</div>
<div class="t" style="left:835px;top:160px;color:#5f6368;letter-spacing:-0.575px">31.01.2025 08:35</div>
<div class="t" style="left:979px;top:160px;color:#5f6368;letter-spacing:-0.3px">NVDRC</div>
<div class="a" style="left:244px;top:600px;width:767px;height:17px;background:#f0f0f0"></div>
<div class="a" style="left:262px;top:601px;width:598px;height:15px;background:#cdcdcd"></div>
<svg class="a" style="left:249.5px;top:603.5px" width="7" height="9" viewBox="0 0 7 9"><path d="M5.5 1l-3.5 3.5 3.5 3.5" stroke="#444" stroke-width="1.6" fill="none"/></svg>
<svg class="a" style="left:999px;top:603px" width="7" height="9" viewBox="0 0 7 9"><path d="M1.5 1l3.5 3.5-3.5 3.5" stroke="#444" stroke-width="1.6" fill="none"/></svg>
<div class="a" style="left:0;top:617px;width:1011px;height:76px;background:#f0f0f0"></div>
<div class="t" style="left:130px;top:631.5px;letter-spacing:-0.1px">Dateiname:</div>
<div class="a" style="left:195px;top:626px;width:599px;height:24px;background:#fff;border:1px solid #7a7a7a"></div>
<div class="t" style="left:199px;top:632px;;letter-spacing:0.104px">NovatoKelpy.nvdrc</div>
<svg class="a" style="left:779.5px;top:635.5px" width="10" height="7" viewBox="0 0 10 7"><path d="M1 1l4 4 4-4" stroke="#444" stroke-width="1.1" fill="none"/></svg>
<div class="a" style="left:806px;top:626px;width:188px;height:23px;background:#e1e1e1;border:1px solid #adadad"></div>
<div class="t" style="left:810px;top:631.5px;;letter-spacing:0.128px">Konfiguration für Dynamischer</div>
<svg class="a" style="left:980px;top:635px" width="10" height="7" viewBox="0 0 10 7"><path d="M1 1l4 4 4-4" stroke="#444" stroke-width="1.1" fill="none"/></svg>
<div class="a" style="left:807px;top:656px;width:87px;height:24px;background:#e1e1e1;border:2px solid #0078d7;text-align:center;line-height:20px;padding-right:2px">Öffnen</div>
<div class="a" style="left:907px;top:656px;width:86px;height:24px;background:#e1e1e1;border:1px solid #adadad;text-align:center;line-height:22px">Abbrechen</div>
<svg class="a" style="left:998px;top:681px" width="12" height="12" viewBox="0 0 12 12" fill="#b5b5b5"><rect x="9" y="1" width="2" height="2"/><rect x="5" y="5" width="2" height="2"/><rect x="9" y="5" width="2" height="2"/><rect x="1" y="9" width="2" height="2"/><rect x="5" y="9" width="2" height="2"/><rect x="9" y="9" width="2" height="2"/></svg>
</div>
<div class="red" style="left:1083px;top:381px;width:189px;height:45px"></div>
<div class="red" style="left:1615px;top:880px;width:112px;height:38px"></div>
<svg class="a" style="left:1860px;top:0" width="6" height="1059" viewBox="0 0 6 1059">
<g fill="#999"><rect x="0" y="22" width="6" height="1"/><rect x="0" y="40" width="6" height="1"/><rect x="0" y="129" width="6" height="1"/><rect x="0" y="137" width="6" height="1" fill="#c4c4c4"/>
<rect x="0" y="335" width="6" height="1"/><rect x="0" y="342" width="6" height="1"/><rect x="0" y="355" width="4" height="1"/><rect x="2" y="359" width="4" height="1"/><rect x="2" y="359" width="1" height="7"/><rect x="0" y="366" width="6" height="1"/><rect x="0" y="390" width="6" height="1"/>
<rect x="0" y="570" width="6" height="1"/><rect x="0" y="616" width="6" height="1"/><rect x="0" y="633" width="6" height="1"/></g>
<rect x="0" y="310" width="6" height="1" fill="#8e8"/><rect x="0" y="313" width="6" height="3" fill="#22f"/><rect x="0" y="318" width="6" height="1" fill="#cfc"/><rect x="0" y="320" width="6" height="1" fill="#8e8"/><rect x="0" y="322" width="6" height="3" fill="#f11"/><rect x="0" y="327" width="6" height="1" fill="#8e8"/>
<rect x="0" y="586" width="6" height="1" fill="#8e8"/><rect x="0" y="587" width="6" height="3" fill="#f11"/><rect x="0" y="591" width="6" height="1" fill="#8e8"/><rect x="0" y="623" width="6" height="1" fill="#ee3"/>
<g fill="none" stroke="#aaa" stroke-width="1"><rect x="0.5" y="638.5" width="8" height="17"/><path d="M0.5 638.5l6 17M6 638.5l-5.5 17"/><rect x="0.5" y="881.5" width="8" height="15"/><path d="M0.5 881.5l6 15M6 881.5l-5.5 15"/><path d="M0 1024.5h6M0 1041.5h6M0 1025l7 8M7 1025l-7 8M0 1034l7 8M7 1034l-7 8"/><rect x="1.5" y="910.5" width="8" height="105"/><rect x="3.5" y="914.5" width="8" height="95"/></g>
<rect x="0" y="656" width="6" height="9" fill="#9a9a9a"/><rect x="0" y="671" width="6" height="1" fill="#eee"/>
<rect x="0" y="899" width="6" height="10" fill="#9a9a9a"/>
<g fill="#e040e0"><rect x="0" y="836" width="6" height="1"/><rect x="0" y="839" width="6" height="2"/><rect x="0" y="843" width="6" height="1"/><rect x="1" y="836" width="1" height="8"/></g>
<g fill="#6e6"><rect x="0" y="855" width="6" height="1"/><rect x="0" y="858" width="6" height="2"/><rect x="0" y="863" width="6" height="1"/><rect x="1" y="855" width="1" height="9"/></g>
</svg>
<div class="t" style="left:1860px;top:347px;color:#bbb;font-size:7px;line-height:8px;height:8px">Q</div>
<div class="t" style="left:1863px;top:358px;color:#bbb;font-size:8px;line-height:8px;height:8px">F</div>
<div class="t" style="left:1861px;top:656px;color:#fff;font-size:9px;line-height:9px;height:9px">K</div>
</body></html>
